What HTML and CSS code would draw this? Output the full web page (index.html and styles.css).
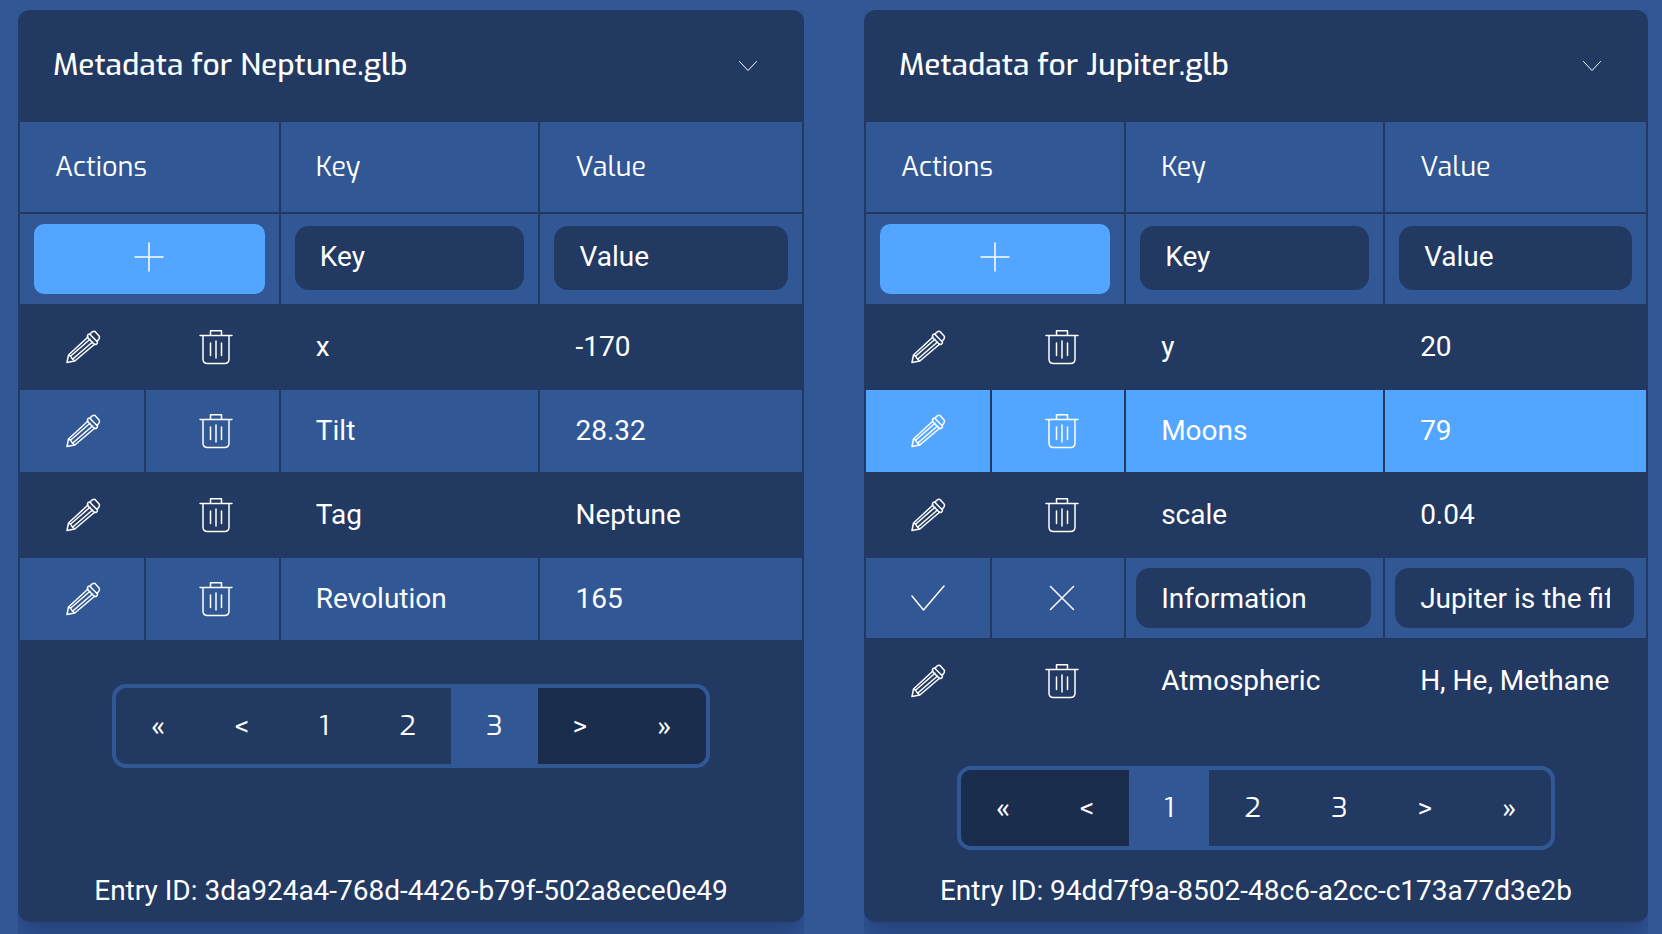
FILE: index.html
```
<!DOCTYPE html>
<html lang="en">
<head>
<meta charset="utf-8">
<title>Metadata</title>
<link rel="stylesheet" href="styles.css">
</head>
<body>
<svg class="sprite" aria-hidden="true">
  <symbol id="pencil" viewBox="0 0 36 36">
    <path d="M2 33.500 3.500 26 23 8M2 33.500 9.800 32 29.800 15M3.500 26 5.500 27.200 7.500 30.200 9.800 32M5.500 27.200 25 10.200M7.500 30.200 27.500 13"/>
    <path d="M22.500 6.500Q23 5 24.500 5L32.500 13Q32.500 15 31 15.500L29.500 15.500 22.500 8.500Z"/>
    <path d="M25.500 5.500 25.500 4.500Q28 1.800 30 2.500L34.500 7.500Q34.800 10 32.500 11.800L31.500 11.800"/>
  </symbol>
  <symbol id="trash" viewBox="0 0 36 36">
    <path d="M2 6.500H34M12.500 6.500V1.700H23.500V6.500M5 6.500V30Q5 34.500 9.500 34.500H26.500Q31 34.500 31 30V6.500M12.500 14V26.500M18 12V29M23.500 14V26.500"/>
  </symbol>
  <symbol id="check" viewBox="0 0 36 36"><path d="M2 16 13.500 30 34 6"/></symbol>
  <symbol id="cross" viewBox="0 0 36 36"><path d="M6.500 6.500 29.500 29.500M29.500 6.500 6.500 29.500"/></symbol>
  <symbol id="plus" viewBox="0 0 36 36"><path d="M18 4V32M4 18H32"/></symbol>
  <symbol id="chevron" viewBox="0 0 36 36"><path d="M9.500 14.500 18 23.500 26.500 14.500"/></symbol>
</svg>
<main class="panels">
  <section class="panel">
    <header class="panel-head">
      <h2 class="title">Metadata for Neptune.glb</h2>
      <button class="icon-button" aria-label="Collapse"><svg class="icon icon-fine"><use href="#chevron"/></svg></button>
    </header>
    <table class="grid">
      <colgroup><col class="col-edit"><col class="col-delete"><col class="col-key"><col class="col-value"></colgroup>
      <thead>
        <tr class="head-row"><th colspan="2">Actions</th><th>Key</th><th>Value</th></tr>
      </thead>
      <tbody>
        <tr class="add-row">
          <td colspan="2"><button class="add" aria-label="Add"><svg class="icon"><use href="#plus"/></svg></button></td>
          <td><input class="field" type="text" placeholder="Key" aria-label="Key"></td>
          <td><input class="field" type="text" placeholder="Value" aria-label="Value"></td>
        </tr>
        <tr class="row dark"><td class="action"><button class="icon-button" aria-label="Edit"><svg class="icon"><use href="#pencil"/></svg></button></td><td class="action delete"><button class="icon-button" aria-label="Delete"><svg class="icon"><use href="#trash"/></svg></button></td><td>x</td><td>-170</td></tr>
        <tr class="row"><td class="action"><button class="icon-button" aria-label="Edit"><svg class="icon"><use href="#pencil"/></svg></button></td><td class="action delete"><button class="icon-button" aria-label="Delete"><svg class="icon"><use href="#trash"/></svg></button></td><td>Tilt</td><td>28.32</td></tr>
        <tr class="row dark"><td class="action"><button class="icon-button" aria-label="Edit"><svg class="icon"><use href="#pencil"/></svg></button></td><td class="action delete"><button class="icon-button" aria-label="Delete"><svg class="icon"><use href="#trash"/></svg></button></td><td>Tag</td><td>Neptune</td></tr>
        <tr class="row"><td class="action"><button class="icon-button" aria-label="Edit"><svg class="icon"><use href="#pencil"/></svg></button></td><td class="action delete"><button class="icon-button" aria-label="Delete"><svg class="icon"><use href="#trash"/></svg></button></td><td>Revolution</td><td>165</td></tr>
      </tbody>
    </table>
    <nav class="pager" aria-label="Pages">
      <button class="page">«</button><button class="page">&lt;</button><button class="page one">1</button><button class="page num">2</button><button class="page num current" aria-current="page">3</button><button class="page" disabled>&gt;</button><button class="page" disabled>»</button>
    </nav>
    <footer class="entry">Entry ID: 3da924a4-768d-4426-b79f-502a8ece0e49</footer>
  </section>

  <section class="panel">
    <header class="panel-head">
      <h2 class="title">Metadata for Jupiter.glb</h2>
      <button class="icon-button" aria-label="Collapse"><svg class="icon icon-fine"><use href="#chevron"/></svg></button>
    </header>
    <table class="grid">
      <colgroup><col class="col-edit"><col class="col-delete"><col class="col-key"><col class="col-value"></colgroup>
      <thead>
        <tr class="head-row"><th colspan="2">Actions</th><th>Key</th><th>Value</th></tr>
      </thead>
      <tbody>
        <tr class="add-row">
          <td colspan="2"><button class="add" aria-label="Add"><svg class="icon"><use href="#plus"/></svg></button></td>
          <td><input class="field" type="text" placeholder="Key" aria-label="Key"></td>
          <td><input class="field" type="text" placeholder="Value" aria-label="Value"></td>
        </tr>
        <tr class="row dark"><td class="action"><button class="icon-button" aria-label="Edit"><svg class="icon"><use href="#pencil"/></svg></button></td><td class="action delete"><button class="icon-button" aria-label="Delete"><svg class="icon"><use href="#trash"/></svg></button></td><td>y</td><td>20</td></tr>
        <tr class="row selected"><td class="action"><button class="icon-button" aria-label="Edit"><svg class="icon"><use href="#pencil"/></svg></button></td><td class="action delete"><button class="icon-button" aria-label="Delete"><svg class="icon"><use href="#trash"/></svg></button></td><td>Moons</td><td>79</td></tr>
        <tr class="row dark"><td class="action"><button class="icon-button" aria-label="Edit"><svg class="icon"><use href="#pencil"/></svg></button></td><td class="action delete"><button class="icon-button" aria-label="Delete"><svg class="icon"><use href="#trash"/></svg></button></td><td>scale</td><td>0.04</td></tr>
        <tr class="row editing"><td class="action"><button class="icon-button" aria-label="Save"><svg class="icon"><use href="#check"/></svg></button></td><td class="action delete"><button class="icon-button" aria-label="Cancel"><svg class="icon"><use href="#cross"/></svg></button></td><td><input class="field" type="text" value="Information" aria-label="Key"></td><td><input class="field" type="text" value="Jupiter is the fifth planet" aria-label="Value"></td></tr>
        <tr class="row dark"><td class="action"><button class="icon-button" aria-label="Edit"><svg class="icon"><use href="#pencil"/></svg></button></td><td class="action delete"><button class="icon-button" aria-label="Delete"><svg class="icon"><use href="#trash"/></svg></button></td><td>Atmospheric</td><td>H, He, Methane</td></tr>
      </tbody>
    </table>
    <nav class="pager" aria-label="Pages">
      <button class="page" disabled>«</button><button class="page" disabled>&lt;</button><button class="page one current" aria-current="page">1</button><button class="page num">2</button><button class="page num">3</button><button class="page">&gt;</button><button class="page">»</button>
    </nav>
    <footer class="entry">Entry ID: 94dd7f9a-8502-48c6-a2cc-c173a77d3e2b</footer>
  </section>
</main>
</body>
</html>
```
FILE: styles.css
```
:root {
  --blue: #315795;
  --navy: #223962;
  --deep: #1b2d4d;
  --bright: #53a6ff;
}
* { box-sizing: border-box; }
body {
  margin: 0;
  background: var(--blue);
  color: #fff;
  font: 28px/36px Roboto, "Liberation Sans", sans-serif;
}
button, input { font: inherit; color: inherit; border: 0; margin: 0; }
button { background: none; padding: 0; cursor: pointer; }
.sprite { position: absolute; width: 0; height: 0; }
.panels {
  display: grid;
  grid-template-columns: 393fr 392fr;
  gap: 60px;
  min-height: 100vh;
  padding: 10px 14px 12px 18px;
}
.panel {
  display: flex;
  flex-direction: column;
  background: var(--navy);
  border-radius: 12px;
  box-shadow: 0 12px 24px rgba(20, 30, 80, 0.4);
  clip-path: inset(0 0 -12px 0);
}
.panel-head {
  display: flex;
  align-items: center;
  justify-content: space-between;
  height: 110px;
  padding: 0 38px 0 35px;
}
.title, th, .one, .num { font-family: Exo, "Exo 2", Roboto, sans-serif; }
.title { margin: 0; font-size: 30px; font-weight: 500; }
.icon-button { display: inline-flex; }
.icon {
  width: 36px;
  height: 36px;
  fill: none;
  stroke: #fff;
  stroke-width: 1.5;
  stroke-linecap: round;
  stroke-linejoin: round;
}
.icon-fine { stroke-width: 1; }
.grid {
  width: 100%;
  table-layout: fixed;
  border-spacing: 2px;
}
.col-edit { width: 16%; }
.col-delete { width: 17.1%; }
.col-key { width: 33.2%; }
th, td {
  padding: 0 30px 0 35px;
  background: var(--blue);
  text-align: left;
  white-space: nowrap;
}
th { height: 90px; padding-bottom: 1px; font-size: 27px; font-weight: 400; }
.row td { height: 82px; }
.row.dark td { background: var(--navy); }
.row.selected td { background: var(--bright); }
.row td.action { padding: 0 0 2px 1px; text-align: center; }
.row td.action.delete { padding-left: 7px; }
.action .icon-button { vertical-align: middle; }
.add-row td { height: 90px; padding: 0 14px; }
.add {
  display: flex;
  align-items: center;
  justify-content: center;
  width: 100%;
  height: 70px;
  padding-bottom: 4px;
  border-radius: 10px;
  background: var(--bright);
}
.field {
  display: block;
  width: 100%;
  height: 60px;
  padding: 0 24px 0 25px;
  border-radius: 14px;
  background: var(--navy);
}
.add-row .field { height: 64px; margin-bottom: 2px; padding-bottom: 4px; }
.field::placeholder { color: #fff; opacity: 1; }
.row.editing td { height: 80px; padding-left: 10px; padding-right: 12px; }
.row.editing td.action { padding: 0 0 2px 1px; }
.row.editing td.action.delete { padding-left: 7px; }
.pager {
  display: flex;
  align-self: center;
  height: 84px;
  margin: 42px 0 16px;
  border: 4px solid var(--blue);
  border-radius: 14px;
  overflow: hidden;
}
.page { width: 84px; padding-bottom: 4px; font-family: "Exo 2", Roboto, sans-serif; font-weight: 500; }
.page.one, .page.num { width: 87px; padding-bottom: 0; font-family: Exo, "Exo 2", Roboto, sans-serif; font-weight: 400; }
.page.one { width: 80px; }
.page.current { background: var(--blue); }
.page:disabled { background: var(--deep); }
.entry { margin-top: auto; padding: 0 20px 13px; text-align: center; }
```
